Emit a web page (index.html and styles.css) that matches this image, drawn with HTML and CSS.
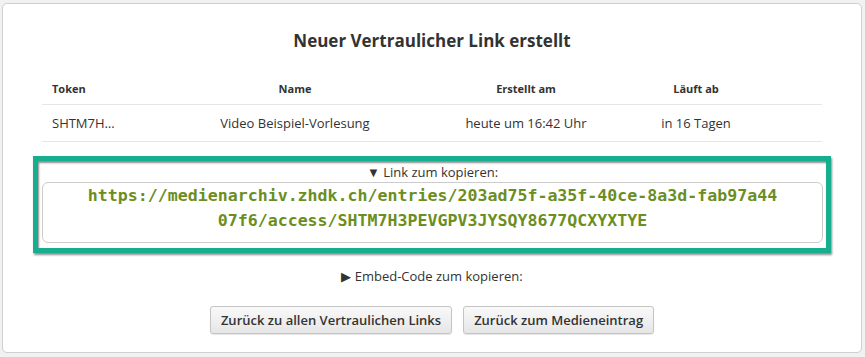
FILE: index.html
```html
<!DOCTYPE html>
<html lang="de">

<head>
  <meta charset="UTF-8">
  <title>Neuer Vertraulicher Link erstellt</title>
  <link rel="stylesheet" href="styles.css">
</head>

<body>
  <div class="panel">
    <h2 class="panel-title">Neuer Vertraulicher Link erstellt</h2>

    <table class="links-table">
      <thead>
        <tr>
          <th class="col-token">Token</th>
          <th class="col-name">Name</th>
          <th class="col-created">Erstellt am</th>
          <th class="col-expires">Läuft ab</th>
        </tr>
      </thead>
      <tbody>
        <tr>
          <td class="col-token">SHTM7H…</td>
          <td class="col-name">Video Beispiel-Vorlesung</td>
          <td class="col-created">heute um 16:42 Uhr</td>
          <td class="col-expires">in 16 Tagen</td>
        </tr>
      </tbody>
    </table>

    <div class="highlight">
      <div class="copy-label">▼ Link zum kopieren:</div>
      <div class="copy-box">https://medienarchiv.zhdk.ch/entries/203ad75f-a35f-40ce-8a3d-fab97a44<br>07f6/access/SHTM7H3PEVGPV3JYSQY8677QCXYXTYE</div>
    </div>

    <div class="copy-label embed-label">▶ Embed-Code zum kopieren:</div>

    <div class="actions">
      <button type="button" class="btn">Zurück zu allen Vertraulichen Links</button>
      <button type="button" class="btn">Zurück zum Medieneintrag</button>
    </div>
  </div>
</body>

</html>
```

FILE: styles.css
```css
body {
  font-family: "Open Sans", Arial, sans-serif;
  background-color: #f1f1f1;
  margin: 0;
  padding: 3px 3px 4px 2px;
  color: #333;
}

.panel {
  background-color: white;
  border: 1px solid #cfcfcf;
  border-radius: 5px;
  height: 350px;
  box-sizing: border-box;
  padding: 0 39px;
}

.panel-title {
  text-align: center;
  font-size: 17px;
  font-weight: bold;
  margin: 0;
  padding-top: 25px;
  height: 43px;
  line-height: 24px;
  box-sizing: content-box;
}

.links-table {
  width: 780px;
  border-collapse: collapse;
  font-size: 13px;
}

.links-table th {
  font-size: 11px;
  font-weight: bold;
  height: 32px;
  padding: 0 10px;
  border-bottom: 1px solid #e6e6e6;
  vertical-align: middle;
}

.links-table td {
  height: 36px;
  padding: 0 10px;
  border-bottom: 1px solid #e6e6e6;
  vertical-align: middle;
}

.col-token {
  width: 100px;
  text-align: left;
}

.col-name {
  width: 246px;
  text-align: center;
}

.col-created {
  width: 176px;
  text-align: center;
}

.col-expires {
  text-align: center;
  padding-right: 64px !important;
}

.highlight {
  margin: 14px -9px 0 -9px;
  border: 5px solid #17ae8f;
  padding: 1px 3px 1px 4px;
  height: 85px;
  box-sizing: content-box;
  box-shadow: 1px 2px 2px rgba(0, 0, 0, 0.45), inset 1px 2px 2px rgba(0, 0, 0, 0.45);
}

.copy-label {
  text-align: center;
  font-size: 13px;
  line-height: 20px;
}

.copy-box {
  border: 1px solid #cccccc;
  border-radius: 6px;
  height: 59px;
  text-align: center;
  font-family: "DejaVu Sans Mono", monospace;
  font-weight: bold;
  font-size: 16.6px;
  line-height: 25px;
  color: #6b8e1e;
  display: flex;
  flex-direction: column;
  justify-content: flex-start;
}

.embed-label {
  margin-top: 13px;
}

.actions {
  display: flex;
  justify-content: center;
  gap: 11px;
  margin-top: 20px;
}

.btn {
  font-family: "Open Sans", Arial, sans-serif;
  font-weight: 600;
  font-size: 13px;
  color: #333;
  background: linear-gradient(#f9f9f9, #e6e6e6);
  border: 1px solid #c4c4c4;
  border-radius: 3px;
  height: 28px;
  padding: 0 10px;
  box-shadow: 0 1px 1px rgba(0, 0, 0, 0.1);
}
```
